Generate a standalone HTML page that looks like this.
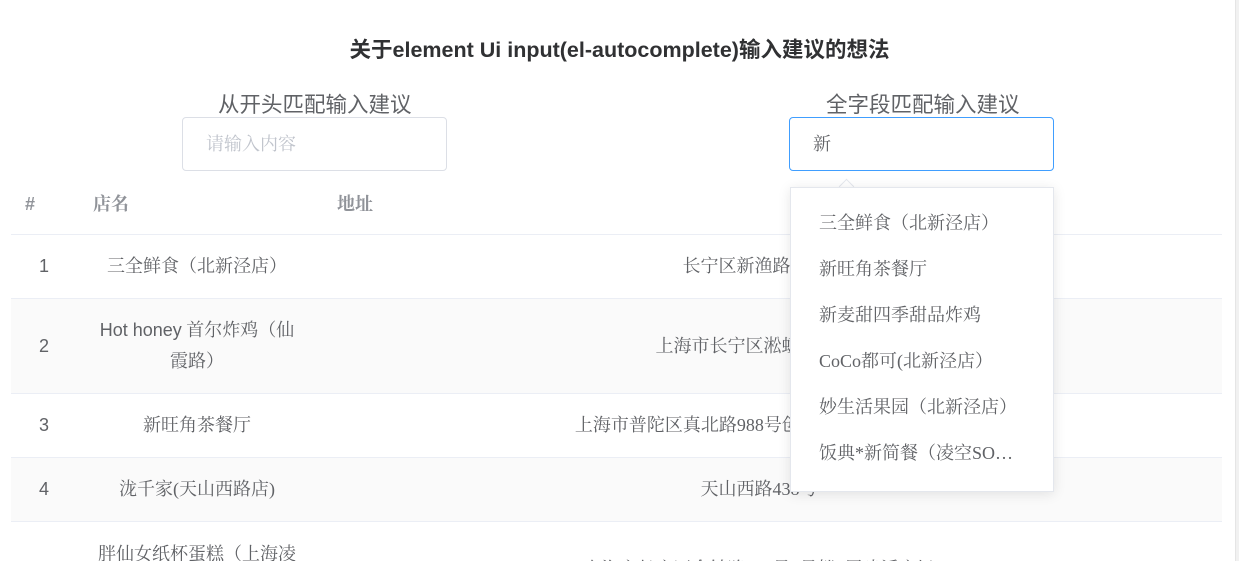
<!DOCTYPE html><html><head><meta charset="utf-8"><style>
html,body{margin:0;width:1239px;height:561px;overflow:hidden}
body{background:#fff;font-family:"Liberation Serif","Noto Serif CJK SC",serif;color:#606266;position:relative}
.t{position:absolute;top:33px;left:0;width:1239px;text-align:center;font:bold 21.5px "Liberation Sans","Noto Sans CJK SC",sans-serif;color:#303133}
.lab{position:absolute;font:21.5px "Liberation Sans","Noto Sans CJK SC",sans-serif;color:#606266;top:88px}
.inp{position:absolute;top:117px;width:265px;height:54px;border:1px solid #dcdfe6;border-radius:4px;box-sizing:border-box;padding-left:23px;line-height:52px;font-size:18px}
.row{position:absolute;left:11px;width:1211px;border-bottom:1px solid #ebeef5;box-sizing:border-box}
.c{position:absolute;top:0;height:100%;display:flex;align-items:center;justify-content:center;text-align:center;font-size:18px;line-height:31px}
.n{left:0;width:66px;font-family:"Liberation Sans",sans-serif}
.nm{left:70px;width:232px}
.ad{left:318px;width:860px}
.h{font-weight:bold;color:#909399;font-size:18px;height:48px}
.dd{position:absolute;left:790px;top:187px;width:264px;height:305px;background:#fff;border:1px solid #e4e7ed;box-shadow:0 2px 12px rgba(0,0,0,.1);box-sizing:border-box;padding-top:12px}
.dd div{height:46px;line-height:46px;padding-left:28px;font-size:18px;color:#606266;white-space:nowrap}
.ar{position:absolute;left:841px;top:181px;width:10px;height:10px;background:#fff;border-left:1px solid #e4e7ed;border-top:1px solid #e4e7ed;transform:rotate(45deg)}
.sb{position:absolute;right:0;top:0;width:3px;height:561px;background:#f1f1f1;border-left:1px solid #e5e5e5}
</style></head><body>
<div class="t">关于element Ui input(el-autocomplete)输入建议的想法</div>
<div class="lab" style="left:218px">从开头匹配输入建议</div>
<div class="lab" style="left:826px">全字段匹配输入建议</div>
<div class="inp" style="left:182px;color:#c0c4cc">请输入内容</div>
<div class="inp" style="left:789px;border-color:#409eff;color:#606266">新</div>
<div class="row" style="top:180px;height:55px"><div class="c h" style="left:6px;width:26px;font-family:'Liberation Sans',sans-serif">#</div><div class="c h" style="left:80px;width:40px">店名</div><div class="c h" style="left:322px;width:44px">地址</div></div>
<div class="row" style="top:235px;height:64px"><div class="c n">1</div><div class="c nm">三全鲜食（北新泾店）</div><div class="c ad">长宁区新渔路144号</div></div>
<div class="row" style="top:299px;height:95px;background:#fafafa"><div class="c n">2</div><div class="c nm"><span><span style="font-family:'Liberation Sans',sans-serif">Hot honey</span> 首尔炸鸡（仙<br>霞路）</span></div><div class="c ad">上海市长宁区淞虹路661号</div></div>
<div class="row" style="top:394px;height:64px"><div class="c n">3</div><div class="c nm">新旺角茶餐厅</div><div class="c ad">上海市普陀区真北路988号创邑金沙谷6号楼113</div></div>
<div class="row" style="top:458px;height:64px;background:#fafafa"><div class="c n">4</div><div class="c nm">泷千家(天山西路店)</div><div class="c ad">天山西路438号</div></div>
<div class="row" style="top:522px;height:39px;border-bottom:none;overflow:hidden"><div class="c n" style="height:95px">5</div><div class="c nm" style="height:95px">胖仙女纸杯蛋糕（上海凌<br>空店）</div><div class="c ad" style="height:95px">上海市长宁区金钟路968号1号楼4层建滔广场</div></div>
<div class="ar"></div>
<div class="dd"><div>三全鲜食（北新泾店）</div><div>新旺角茶餐厅</div><div>新麦甜四季甜品炸鸡</div><div>CoCo都可(北新泾店）</div><div>妙生活果园（北新泾店）</div><div>饭典*新简餐（凌空SO…</div></div>
<div class="sb"></div>
</body></html>
